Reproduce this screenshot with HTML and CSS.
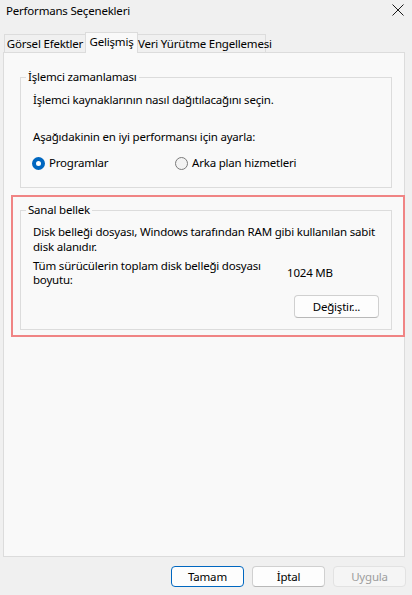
FILE: index.html
```html
<!DOCTYPE html>
<html lang="tr">
<head>
    <meta charset="UTF-8">
    <meta name="viewport" content="width=device-width, initial-scale=1.0">
    <title>Performans Seçenekleri</title>
    <link rel="stylesheet" href="styles.css">
</head>
<body>
<div class="window">

    <!-- Başlık çubuğu -->
    <div class="titlebar">
        <span class="title">Performans Seçenekleri</span>
        <span class="close">
            <svg width="12" height="12" viewBox="0 0 12 12">
                <path d="M0.5 0.5 L11.5 11.5 M11.5 0.5 L0.5 11.5" stroke="#1a1a1a" stroke-width="1" fill="none"/>
            </svg>
        </span>
    </div>

    <!-- Sekmeler -->
    <div class="tabs">
        <div class="tab tab-visual">Görsel Efektler</div>
        <div class="tab tab-advanced active">Gelişmiş</div>
        <div class="tab tab-dep">Veri Yürütme Engellemesi</div>
    </div>

    <div class="panel">
        <!-- İşlemci zamanlaması -->
        <fieldset class="group">
            <legend>İşlemci zamanlaması</legend>
            <p class="line">İşlemci kaynaklarının nasıl dağıtılacağını seçin.</p>
            <p class="line adjust">Aşağıdakinin en iyi performansı için ayarla:</p>
            <div class="radios">
                <label class="radio radio-first"><span class="circle checked"></span>Programlar</label>
                <label class="radio"><span class="circle"></span>Arka plan hizmetleri</label>
            </div>
        </fieldset>

        <!-- Sanal bellek -->
        <div class="highlight">
            <fieldset class="group group-memory">
                <legend>Sanal bellek</legend>
                <p class="para">Disk belleği dosyası, Windows tarafından RAM gibi kullanılan sabit disk alanıdır.</p>
                <div class="size-row">
                    <span class="size-label">Tüm sürücülerin toplam disk belleği dosyası boyutu:</span>
                    <span class="size-value">1024 MB</span>
                </div>
                <div class="actions">
                    <button class="btn btn-change">Değiştir...</button>
                </div>
            </fieldset>
        </div>
    </div>

    <!-- Alt düğmeler -->
    <div class="footer">
        <button class="btn btn-default">Tamam</button>
        <button class="btn">İptal</button>
        <button class="btn btn-disabled" disabled>Uygula</button>
    </div>
</div>
</body>
</html>
```

FILE: styles.css
```css
body {
    margin: 0;
    background: #f0f0f0;
    font-family: "Noto Sans", "Open Sans", sans-serif;
    font-size: 11.5px;
    letter-spacing: -0.2px;
    color: #000;
}
.window {
    width: 412px;
    height: 595px;
    display: flex;
    flex-direction: column;
}

/* başlık */
.titlebar {
    height: 22px;
    display: flex;
    justify-content: space-between;
    padding: 0 8px 0 6px;
}
.title {
    line-height: 22px;
}
.close {
    margin-top: 4px;
    height: 12px;
}
.close svg {
    display: block;
}

/* sekmeler */
.tabs {
    display: flex;
    align-items: flex-end;
    height: 21px;
    margin-top: 10px;
    padding-left: 4px;
    margin-bottom: -1px;
    position: relative;
    z-index: 1;
}
.tab {
    box-sizing: border-box;
    height: 18px;
    line-height: 17px;
    margin-bottom: 1px;
    border: 1px solid #dcdcdc;
    border-bottom: none;
    background: #f0f0f0;
    text-align: center;
    white-space: nowrap;
}
.tab + .tab {
    margin-left: -1px;
}
.tab-visual { width: 82px; }
.tab-advanced { width: 53px; }
.tab-dep { width: 129px; }
.tab.active {
    height: 21px;
    line-height: 18px;
    margin-bottom: 0;
    background: #f9f9f9;
}

/* panel */
.panel {
    flex: 1;
    margin: 0 7px 0 3px;
    border: 1px solid #dcdcdc;
    background: #f9f9f9;
    padding: 16px 0 0 16px;
}
.group {
    box-sizing: border-box;
    width: 372px;
    margin: 0;
    border: 1px solid #dcdcdc;
    padding: 7px 12px 16px 12px;
}
.group legend {
    padding: 0 2px;
    margin-left: -7px;
    line-height: 16px;
}
.line {
    margin: 0;
    line-height: 16px;
}
.line.adjust {
    margin-top: 21px;
}
.radios {
    display: flex;
    margin-top: 10px;
    line-height: 16px;
}
.radio {
    display: flex;
    align-items: center;
}
.radio-first {
    width: 143px;
}
.circle {
    box-sizing: border-box;
    width: 13px;
    height: 13px;
    border-radius: 50%;
    border: 1px solid #7a7a7a;
    background: #f3f3f3;
    margin-right: 4px;
    margin-left: -1px;
}
.circle.checked {
    border: 4px solid #0067c0;
    background: #fff;
}

/* sanal bellek */
.highlight {
    box-sizing: border-box;
    width: 394px;
    margin: 7px 0 0 -9px;
    border: 2px solid #f08484;
    padding: 5px 11px 5px 7px;
}
.group-memory {
    padding: 6px 4px 11px 12px;
}
.para {
    margin: 0;
    line-height: 15px;
}
.size-row {
    display: flex;
    align-items: center;
    margin-top: 5px;
    line-height: 14px;
}
.size-label {
    width: 254px;
}
.actions {
    display: flex;
    justify-content: flex-end;
    margin: 8px 8px 0 0;
}

/* düğmeler */
.btn {
    box-sizing: border-box;
    width: 73px;
    height: 21px;
    padding: 0;
    font-family: inherit;
    font-size: 11.5px;
    letter-spacing: -0.2px;
    color: #000;
    background: #fdfdfd;
    border: 1px solid #d0d0d0;
    border-bottom-color: #b8b8b8;
    border-radius: 4px;
}
.btn-change {
    width: 85px;
    height: 23px;
}
.btn-default {
    border-color: #0067c0;
}
.btn-disabled {
    background: #f5f5f5;
    border-color: #e2e2e2;
    color: #9d9d9d;
}
.footer {
    height: 38px;
    display: flex;
    justify-content: flex-end;
    align-items: flex-start;
    gap: 8px;
    box-sizing: border-box;
    padding: 9px 6px 0 0;
}
```
